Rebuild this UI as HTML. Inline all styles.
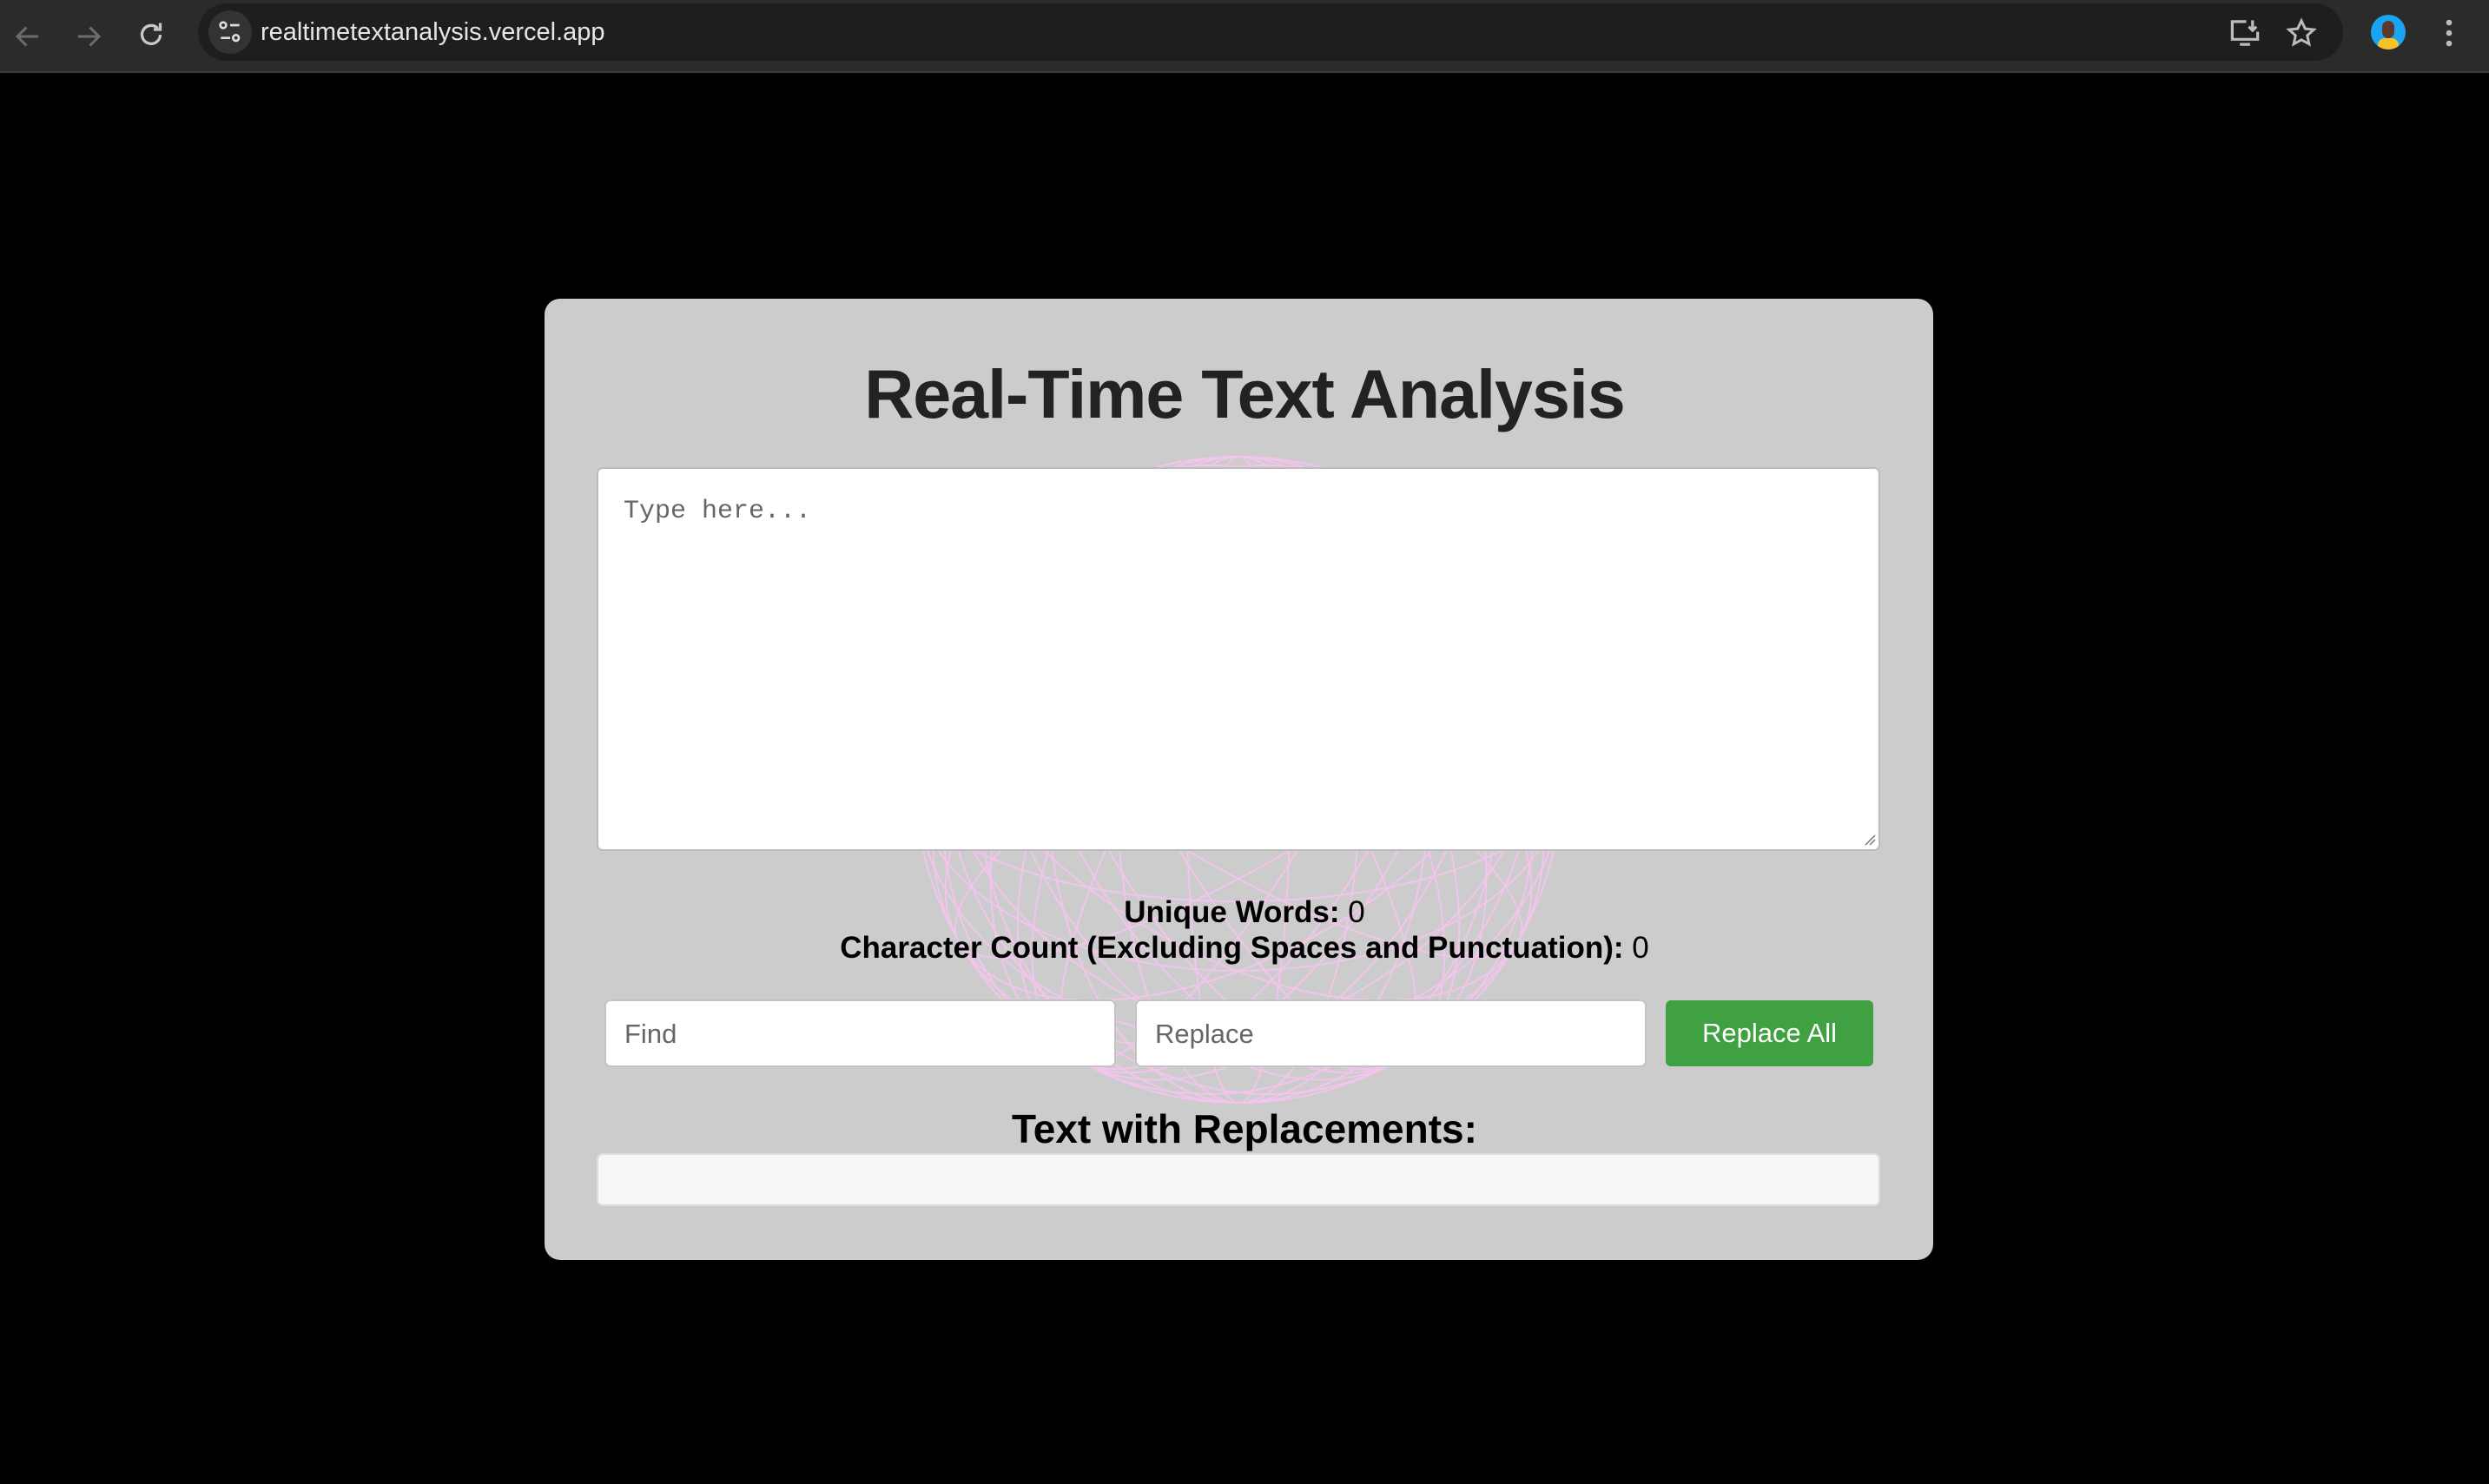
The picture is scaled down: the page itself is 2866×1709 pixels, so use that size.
<!DOCTYPE html>
<html><head><meta charset="utf-8"><style>
*{box-sizing:border-box;margin:0;padding:0}
body{width:2866px;height:1709px;background:#000;position:relative;overflow:hidden;font-family:"Liberation Sans",Arial,sans-serif}
.bar{position:absolute;left:0;top:0;width:2866px;height:84px;background:#2b2b2b;border-bottom:2px solid #3a3a3a}
.pill{position:absolute;left:228px;top:4px;width:2470px;height:66px;background:#1e1e1e;border-radius:33px}
.url{position:absolute;left:300px;top:21px;color:#e6e6e6;font-size:29px}
.card{position:absolute;left:627px;top:344px;width:1599px;height:1107px;background:#cccccc;border-radius:18px;overflow:hidden}
.abs{position:absolute}
h1{position:absolute;left:0;width:100%;top:408px;text-align:center;font-size:79px;font-weight:bold;color:#222;letter-spacing:-1px}
.ta{position:absolute;left:687px;top:538px;width:1478px;height:442px;background:#fff;border:2px solid #bbb;border-radius:7px}
.ph{position:absolute;left:718px;top:572px;font-family:"Liberation Mono",monospace;font-size:30px;color:#666}
.stat{position:absolute;left:0;width:2866px;text-align:center;font-size:35px;color:#000}
.in{position:absolute;top:1151px;height:78px;background:#fff;border:2px solid #c4c4c4;border-radius:7px;font-size:31px;color:#666;padding:20px 0 0 21px}
.btn{position:absolute;left:1918px;top:1152px;width:239px;height:76px;background:#3fa142;border-radius:6px;color:#fff;font-size:31px;text-align:center;line-height:76px}
.out{position:absolute;left:687px;top:1328px;width:1478px;height:61px;background:#f7f7f7;border:2px solid #ddd;border-radius:7px}
</style></head><body>
<div class="bar">
 <svg class="abs" style="left:14px;top:24px" width="36" height="36" viewBox="0 0 24 24" fill="none" stroke="#6c6c6c" stroke-width="2"><path d="M20 12H5M11 5l-7 7 7 7"/></svg>
 <svg class="abs" style="left:84px;top:24px" width="36" height="36" viewBox="0 0 24 24" fill="none" stroke="#6c6c6c" stroke-width="2"><path d="M4 12h15M13 5l7 7-7 7"/></svg>
 <svg class="abs" style="left:156px;top:22px" width="36" height="36" viewBox="0 0 24 24" fill="none" stroke="#c8c8c8" stroke-width="2.2"><path d="M19 12a7 7 0 1 1-2-5M19 3v5h-5"/></svg>
 <div class="pill"></div>
 <div class="abs" style="left:240px;top:12px;width:50px;height:50px;border-radius:25px;background:#333"></div>
 <svg class="abs" style="left:249px;top:21px" width="32" height="32" viewBox="0 0 24 24" fill="none" stroke="#ddd" stroke-width="2"><circle cx="6" cy="6" r="2.5"/><path d="M12 6h8M4 17h8"/><circle cx="17" cy="17" r="2.5"/></svg>
 <div class="url">realtimetextanalysis.vercel.app</div>
 <svg class="abs" style="left:2566px;top:20px" width="38" height="36" viewBox="0 0 26 24" fill="none" stroke="#bbb" stroke-width="2.2"><path d="M14 3H3v14h20v-6M19 2v8M16 7l3 3 3-3M9 21h8"/></svg>
 <svg class="abs" style="left:2632px;top:20px" width="36" height="36" viewBox="0 0 24 24" fill="none" stroke="#bbb" stroke-width="2"><path d="M12 2.5l2.9 6.2 6.6.7-5 4.5 1.4 6.6L12 17.2l-5.9 3.3 1.4-6.6-5-4.5 6.6-.7z"/></svg>
 <div class="abs" style="left:2730px;top:17px;width:40px;height:40px;border-radius:20px;background:#1aa5f2;overflow:hidden"><div class="abs" style="left:8px;top:27px;width:24px;height:16px;border-radius:10px;background:#f5c22a"></div><div class="abs" style="left:13px;top:7px;width:14px;height:20px;border-radius:7px;background:#5a3a2a"></div></div>
 <svg class="abs" style="left:2808px;top:20px" width="24" height="36" viewBox="0 0 8 24" fill="#bbb"><circle cx="4" cy="4" r="2.2"/><circle cx="4" cy="12" r="2.2"/><circle cx="4" cy="20" r="2.2"/></svg>
</div>
<div class="card"></div>
<svg class="abs" style="left:1053px;top:525px" width="746" height="746" viewBox="-373 -373 746 746" fill="none" stroke="#f6c4ef" stroke-width="2" opacity="0.95">
 <circle r="372"/>
 <ellipse rx="372" ry="60"/><ellipse rx="372" ry="140"/><ellipse rx="372" ry="220"/><ellipse rx="372" ry="300"/>
 <ellipse rx="60" ry="372"/><ellipse rx="140" ry="372"/><ellipse rx="220" ry="372"/><ellipse rx="300" ry="372"/>
 <g transform="rotate(30)"><ellipse rx="372" ry="100"/><ellipse rx="372" ry="200"/><ellipse rx="372" ry="280"/><ellipse rx="100" ry="372"/><ellipse rx="200" ry="372"/></g>
 <g transform="rotate(-30)"><ellipse rx="372" ry="100"/><ellipse rx="372" ry="200"/><ellipse rx="372" ry="280"/><ellipse rx="100" ry="372"/><ellipse rx="200" ry="372"/></g>
 <g transform="rotate(60)"><ellipse rx="372" ry="170"/><ellipse rx="372" ry="250"/><ellipse rx="372" ry="330"/></g>
 <g transform="rotate(-60)"><ellipse rx="372" ry="170"/><ellipse rx="372" ry="250"/><ellipse rx="372" ry="330"/></g>
</svg>
<h1>Real-Time Text Analysis</h1>
<div class="ta"></div>
<svg class="abs" style="left:2146px;top:960px" width="14" height="14" viewBox="0 0 14 14" stroke="#777" stroke-width="1.5"><path d="M2 13L13 2M7 13l6-6"/></svg>
<div class="ph">Type here...</div>
<div class="stat" style="top:1031px"><b>Unique Words:</b> 0</div>
<div class="stat" style="top:1072px"><b>Character Count (Excluding Spaces and Punctuation):</b> 0</div>
<div class="in" style="left:696px;width:589px">Find</div>
<div class="in" style="left:1307px;width:589px">Replace</div>
<div class="btn">Replace All</div>
<div class="stat" style="top:1273px;font-size:46px;font-weight:bold">Text with Replacements:</div>
<div class="out"></div>
</body></html>
